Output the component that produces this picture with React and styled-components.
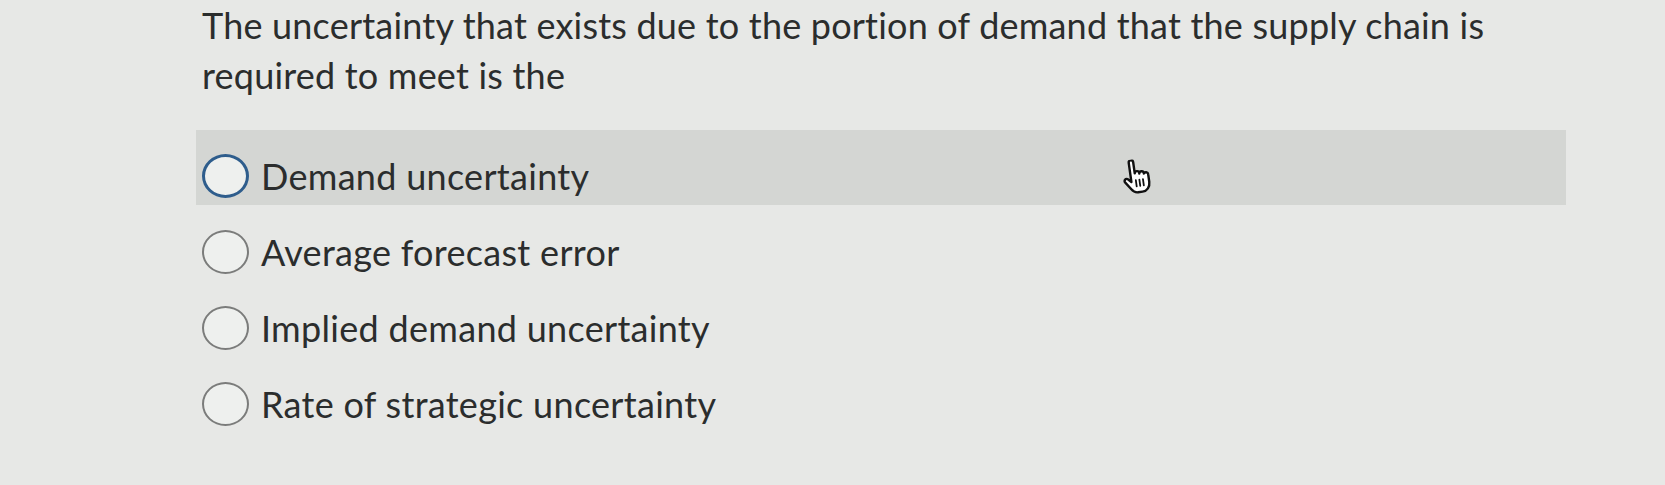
import React from "react"
import styled, { createGlobalStyle } from "styled-components"

const GlobalStyle = createGlobalStyle`
  html, body {
    margin: 0;
    padding: 0;
    background-color: #e7e8e6;
  }
  body {
    font-family: Lato, "Open Sans", sans-serif;
    color: #2b2d2d;
  }
`

const Page = styled.div`
  position: relative;
  width: 1665px;
  height: 485px;
  box-sizing: border-box;
  padding-left: 196px;
  padding-right: 99px;
  overflow: hidden;
`

const Question = styled.p`
  margin: 0;
  padding-left: 6px;
  font-size: 36px;
  line-height: 50px;
  letter-spacing: 0.2px;
`

const Options = styled.div`
  display: flex;
  flex-direction: column;
  gap: 1px;
  margin-top: 30px;
`

const Option = styled.label`
  display: flex;
  align-items: center;
  gap: 12px;
  height: 75px;
  box-sizing: border-box;
  padding: 16px 0 0 6px;
  background-color: ${(p) => (p.$hover ? "#d4d6d3" : "transparent")};
  font-size: 36px;
  letter-spacing: 0.3px;
  cursor: pointer;
`

const Radio = styled.span`
  flex: none;
  width: 47px;
  height: 44px;
  box-sizing: border-box;
  border-radius: 50%;
  border: ${(p) => (p.$focus ? "3.5px solid #2e5d8c" : "2px solid #7b7c7b")};
  background-color: #eef0ee;
`

const Cursor = styled.svg`
  position: absolute;
  left: 1120px;
  top: 159px;
  width: 32px;
  height: 36px;
  transform: rotate(-8deg);
`

const choices = [
  "Demand uncertainty",
  "Average forecast error",
  "Implied demand uncertainty",
  "Rate of strategic uncertainty",
]

export default function App() {
  return (
    <Page>
      <GlobalStyle />
      <Question>
        The uncertainty that exists due to the portion of demand that the
        supply chain is required to meet is the
      </Question>
      <Options>
        {choices.map((c, i) => (
          <Option key={c} $hover={i === 0}>
            <Radio $focus={i === 0} />
            {c}
          </Option>
        ))}
      </Options>
      <Cursor viewBox="0 0 20 24">
        <path
          d="M6.5 2a1.5 1.5 0 0 1 3 0v7.5a1.5 1.5 0 0 1 3 0.5a1.5 1.5 0 0 1 3 0.5a1.5 1.5 0 0 1 2.8 0.8v5.2c0 3.2-2.2 5.8-5.3 5.8h-3c-2 0-3.2-1-4.2-2.6l-3.4-5a1.4 1.4 0 0 1 2.2-1.8l1.9 2z"
          fill="#fff"
          stroke="#111"
          strokeWidth="1.6"
          strokeLinejoin="round"
        />
        <path
          d="M9.6 14v4.2M12 14v4.2M14.4 14v4.2"
          stroke="#111"
          strokeWidth="1.2"
          strokeLinecap="round"
        />
      </Cursor>
    </Page>
  )
}
